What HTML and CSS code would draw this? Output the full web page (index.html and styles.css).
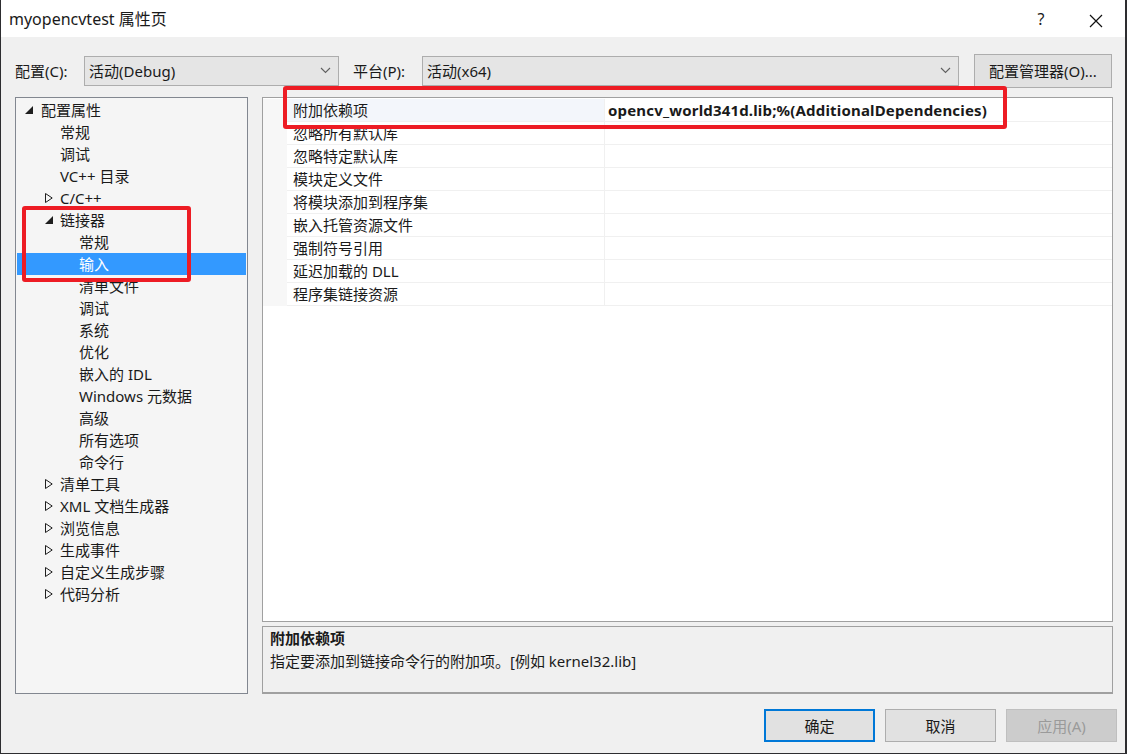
FILE: index.html
```html
<!DOCTYPE html>
<html lang="zh-CN">
<head>
<meta charset="utf-8">
<title>myopencvtest 属性页</title>
<link rel="stylesheet" href="styles.css">
</head>
<body>
<div class="window">
  <div class="titlebar">
    <div class="title">myopencvtest 属性页</div>
    <div class="tb-help">?</div>
    <div class="tb-close">
      <svg width="14" height="14" viewBox="0 0 14 14"><path d="M1 1 L13 13 M13 1 L1 13" stroke="#111" stroke-width="1.2" fill="none"/></svg>
    </div>
  </div>
  <div class="content">
    <div class="config-row">
      <span class="lbl lbl-config">配置(C):</span>
      <div class="combo combo-config"><span>活动(Debug)</span>
        <svg class="chev" width="11" height="7" viewBox="0 0 11 7"><path d="M1 1 L5.5 5.5 L10 1" stroke="#606060" stroke-width="1.1" fill="none"/></svg>
      </div>
      <span class="lbl lbl-platform">平台(P):</span>
      <div class="combo combo-platform"><span>活动(x64)</span>
        <svg class="chev" width="11" height="7" viewBox="0 0 11 7"><path d="M1 1 L5.5 5.5 L10 1" stroke="#606060" stroke-width="1.1" fill="none"/></svg>
      </div>
      <button class="btn btn-manager">配置管理器(O)...</button>
    </div>
    <div class="main">
      <div class="tree">
        <div class="node l0"><span class="exp"><svg width="8" height="8" viewBox="0 0 8 8"><polygon points="8,0 8,8 0,8" fill="#1e1e1e"/></svg></span>配置属性</div>
        <div class="node l1">常规</div>
        <div class="node l1">调试</div>
        <div class="node l1">VC++ 目录</div>
        <div class="node l1"><span class="exp"><svg width="8" height="10" viewBox="0 0 8 10"><polygon points="0.5,0.5 7.2,5 0.5,9.5" fill="none" stroke="#1e1e1e" stroke-width="1"/></svg></span>C/C++</div>
        <div class="node l1"><span class="exp"><svg width="8" height="8" viewBox="0 0 8 8"><polygon points="8,0 8,8 0,8" fill="#1e1e1e"/></svg></span>链接器</div>
        <div class="node l2">常规</div>
        <div class="node l2 sel">输入</div>
        <div class="node l2">清单文件</div>
        <div class="node l2">调试</div>
        <div class="node l2">系统</div>
        <div class="node l2">优化</div>
        <div class="node l2">嵌入的 IDL</div>
        <div class="node l2">Windows 元数据</div>
        <div class="node l2">高级</div>
        <div class="node l2">所有选项</div>
        <div class="node l2">命令行</div>
        <div class="node l1"><span class="exp"><svg width="8" height="10" viewBox="0 0 8 10"><polygon points="0.5,0.5 7.2,5 0.5,9.5" fill="none" stroke="#1e1e1e" stroke-width="1"/></svg></span>清单工具</div>
        <div class="node l1"><span class="exp"><svg width="8" height="10" viewBox="0 0 8 10"><polygon points="0.5,0.5 7.2,5 0.5,9.5" fill="none" stroke="#1e1e1e" stroke-width="1"/></svg></span>XML 文档生成器</div>
        <div class="node l1"><span class="exp"><svg width="8" height="10" viewBox="0 0 8 10"><polygon points="0.5,0.5 7.2,5 0.5,9.5" fill="none" stroke="#1e1e1e" stroke-width="1"/></svg></span>浏览信息</div>
        <div class="node l1"><span class="exp"><svg width="8" height="10" viewBox="0 0 8 10"><polygon points="0.5,0.5 7.2,5 0.5,9.5" fill="none" stroke="#1e1e1e" stroke-width="1"/></svg></span>生成事件</div>
        <div class="node l1"><span class="exp"><svg width="8" height="10" viewBox="0 0 8 10"><polygon points="0.5,0.5 7.2,5 0.5,9.5" fill="none" stroke="#1e1e1e" stroke-width="1"/></svg></span>自定义生成步骤</div>
        <div class="node l1"><span class="exp"><svg width="8" height="10" viewBox="0 0 8 10"><polygon points="0.5,0.5 7.2,5 0.5,9.5" fill="none" stroke="#1e1e1e" stroke-width="1"/></svg></span>代码分析</div>
      </div>
      <div class="right">
        <div class="grid">
          <div class="row first"><div class="gut"></div><div class="name">附加依赖项</div><div class="val bold">opencv_world341d.lib;%(AdditionalDependencies)</div></div>
          <div class="row"><div class="gut"></div><div class="name">忽略所有默认库</div><div class="val"></div></div>
          <div class="row"><div class="gut"></div><div class="name">忽略特定默认库</div><div class="val"></div></div>
          <div class="row"><div class="gut"></div><div class="name">模块定义文件</div><div class="val"></div></div>
          <div class="row"><div class="gut"></div><div class="name">将模块添加到程序集</div><div class="val"></div></div>
          <div class="row"><div class="gut"></div><div class="name">嵌入托管资源文件</div><div class="val"></div></div>
          <div class="row"><div class="gut"></div><div class="name">强制符号引用</div><div class="val"></div></div>
          <div class="row"><div class="gut"></div><div class="name">延迟加载的 DLL</div><div class="val"></div></div>
          <div class="row"><div class="gut"></div><div class="name">程序集链接资源</div><div class="val"></div></div>
        </div>
        <div class="desc">
          <div class="desc-title">附加依赖项</div>
          <div class="desc-text">指定要添加到链接命令行的附加项。[例如 kernel32.lib]</div>
        </div>
      </div>
    </div>
    <div class="buttons">
      <button class="btn btn-dlg btn-default">确定</button>
      <button class="btn btn-dlg">取消</button>
      <button class="btn btn-dlg btn-disabled">应用(A)</button>
    </div>
  </div>
  <div class="mark mark-tree"></div>
  <div class="mark mark-grid"></div>
</div>
</body>
</html>
```
FILE: styles.css
```css
html, body {
  margin: 0;
  padding: 0;
  background: #2d2d30;
}
body {
  width: 1127px;
  height: 754px;
  overflow: hidden;
  font-family: "Noto Sans", "Noto Sans CJK SC", sans-serif;
  font-size: 15px;
  color: #1a1a1a;
}
.window {
  position: relative;
  margin-left: 1px;
  width: 1124px;
  height: 753px;
  background: #f0f0f0;
  display: flex;
  flex-direction: column;
}
.titlebar {
  height: 37px;
  background: #ffffff;
  display: flex;
  align-items: center;
}
.title {
  padding-left: 8px;
  font-size: 16px;
  flex: 1;
  line-height: 20px;
}
.tb-help {
  width: 20px;
  text-align: center;
  font-size: 16px;
  margin-right: 38px;
}
.tb-close {
  width: 14px;
  height: 14px;
  margin-right: 22px;
}
.content {
  flex: 1;
  display: flex;
  flex-direction: column;
  padding: 0 12px 0 14px;
}
.config-row {
  margin-top: 17px;
  height: 33px;
  display: flex;
  align-items: center;
}
.lbl {
  line-height: 20px;
}
.lbl-config { width: 69px; }
.lbl-platform { width: 69px; margin-left: 14px; }
.combo {
  height: 30px;
  box-sizing: border-box;
  border: 1px solid #adadad;
  background: #e5e5e5;
  display: flex;
  align-items: center;
  padding-left: 4px;
  position: relative;
  line-height: 20px;
}
.combo-config { width: 255px; }
.combo-platform { width: 537px; }
.combo span { flex: 1; }
.chev { margin-right: 7px; }
.btn {
  font-family: "Noto Sans", "Noto Sans CJK SC", sans-serif;
  font-size: 15px;
  color: #1a1a1a;
  background: #e1e1e1;
  border: 1px solid #adadad;
  box-sizing: border-box;
  padding: 0;
  line-height: 20px;
}
.btn-manager {
  margin-left: 15px;
  width: 138px;
  height: 34px;
}
.main {
  margin-top: 10px;
  height: 597px;
  display: flex;
}
.tree {
  width: 233px;
  box-sizing: border-box;
  border: 1px solid #828790;
  background: #f5f5f5;
  padding: 1px 1px 0 1px;
}
.node {
  height: 22px;
  line-height: 22px;
  white-space: nowrap;
  position: relative;
}
.node.l0 { padding-left: 24px; }
.node.l1 { padding-left: 43px; }
.node.l2 { padding-left: 62px; }
.node .exp {
  position: absolute;
  top: 0;
  height: 22px;
  display: flex;
  align-items: center;
}
.node.l0 .exp { left: 8px; }
.node.l1 .exp { left: 28px; }
.node.sel {
  background: #3399ff;
  color: #ffffff;
}
.right {
  margin-left: 14px;
  flex: 1;
  display: flex;
  flex-direction: column;
}
.grid {
  height: 525px;
  box-sizing: border-box;
  border: 1px solid #a0a0a0;
  background: #ffffff;
  padding-top: 1px;
}
.row {
  display: grid;
  grid-template-columns: 24px 317px 1fr;
  height: 23px;
}
.gut {
  background: #f7f7f7;
}
.name, .val {
  border-bottom: 1px solid #f0f0f0;
  line-height: 22px;
  white-space: nowrap;
  overflow: hidden;
}
.name {
  padding-left: 6px;
}
.val {
  border-left: 1px solid #f0f0f0;
  padding-left: 3px;
}
.row.first .name {
  background: #f3f6fb;
}
.bold {
  font-weight: bold;
  letter-spacing: 0.17px;
}
.desc {
  margin-top: 4px;
  height: 68px;
  box-sizing: border-box;
  border: 1px solid #a0a0a0;
  border-bottom-width: 2px;
  background: #f0f0f0;
  padding: 0 0 0 7px;
}
.desc-title {
  font-weight: bold;
  line-height: 22px;
}
.desc-text {
  line-height: 24px;
}
.buttons {
  margin-top: 15px;
  margin-right: -4px;
  display: flex;
  justify-content: flex-end;
  gap: 10px;
}
.btn-dlg {
  width: 111px;
  height: 33px;
}
.btn-default {
  border: 2px solid #0078d7;
}
.btn-disabled {
  background: #cccccc;
  border-color: #bfbfbf;
  color: #9a9a9a;
}
.mark {
  position: absolute;
  border: 4px solid #ed1c24;
  border-radius: 3px;
  box-sizing: border-box;
}
.mark-tree {
  left: 21px;
  top: 206px;
  width: 169px;
  height: 76px;
}
.mark-grid {
  left: 282px;
  top: 86px;
  width: 724px;
  height: 43px;
}
```
